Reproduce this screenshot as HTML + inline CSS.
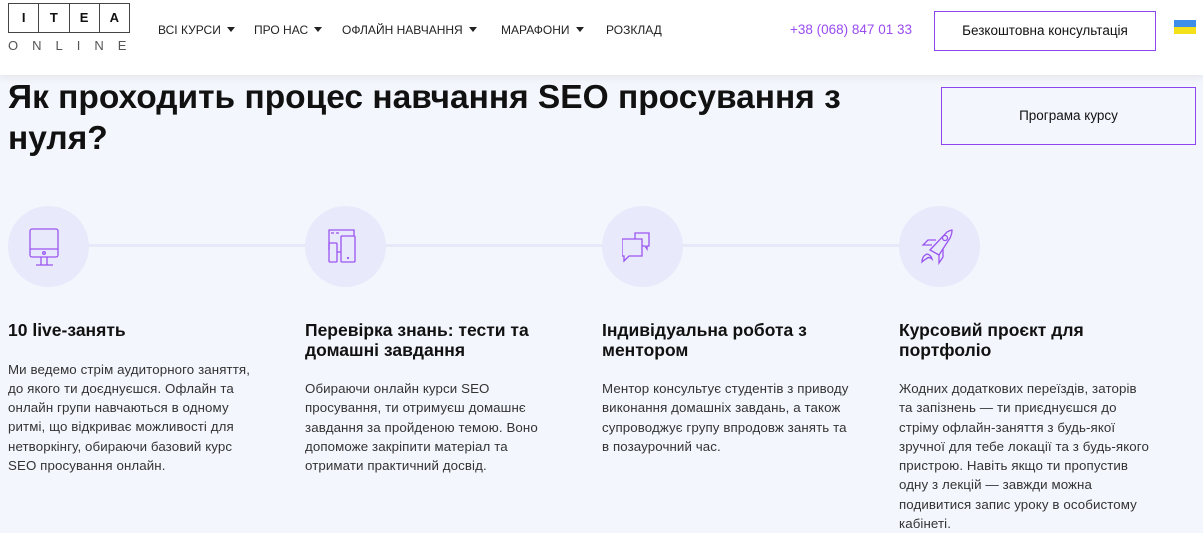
<!DOCTYPE html>
<html><head><meta charset="utf-8"><style>
*{margin:0;padding:0;box-sizing:border-box}
body{width:1203px;height:533px;overflow:hidden;background:#f4f6fd;font-family:"Liberation Sans","DejaVu Sans",sans-serif;color:#111;position:relative}
.hdr{position:absolute;left:0;top:0;width:1203px;height:75px;background:#fff;box-shadow:0 2px 8px rgba(0,0,0,.08)}
.logo{position:absolute;left:8px;top:3px}
.logo .box{display:flex;border:1px solid #444;width:122px;height:30px}
.logo .box span{flex:1;border-right:1px solid #444;text-align:center;font-weight:bold;font-size:13px;line-height:28px}
.logo .box span:last-child{border-right:none}
.logo .on{font-size:13px;letter-spacing:14px;color:#555;margin-top:5px}
.nav{position:absolute;top:23px;font-size:12px;color:#222}
.nav i{display:inline-block;width:0;height:0;border-left:4px solid transparent;border-right:4px solid transparent;border-top:5px solid #222;margin-left:6px;vertical-align:2px}
.phone{position:absolute;left:790px;top:22px;font-size:13.5px;color:#9a4cf0}
.btn{position:absolute;border:1.5px solid #8d45ee;background:#fff;text-align:center;font-size:13.5px;color:#111}
h1{position:absolute;left:8px;top:77px;font-size:33.5px;line-height:41px;font-weight:bold;width:880px}
.line{position:absolute;left:48px;width:891px;top:244px;height:3px;background:#e8e9f8}
.c{position:absolute;top:206px;width:81px;height:81px;border-radius:50%;background:#e8e9fb}
.c svg{position:absolute;left:20px;top:20px}
.col{position:absolute;top:321px;width:252px}
.col h3{font-size:17.5px;line-height:19.5px;font-weight:bold;margin-bottom:19px}
.col p{font-size:13.3px;line-height:19.3px;color:#333;letter-spacing:.1px}
</style></head><body>
<div class="hdr">
 <div class="logo"><div class="box"><span>I</span><span>T</span><span>E</span><span>A</span></div><div class="on">ONLINE</div></div>
 <div class="nav" style="left:158px">ВСІ КУРСИ<i></i></div>
 <div class="nav" style="left:254px">ПРО НАС<i></i></div>
 <div class="nav" style="left:342px">ОФЛАЙН НАВЧАННЯ<i></i></div>
 <div class="nav" style="left:501px">МАРАФОНИ<i></i></div>
 <div class="nav" style="left:606px">РОЗКЛАД</div>
 <div class="phone">+38 (068) 847 01 33</div>
 <div class="btn" style="left:934px;top:11px;width:222px;height:40px;line-height:37px">Безкоштовна консультація</div>
 <div style="position:absolute;left:1174px;top:20px;width:22px;height:14px"><div style="height:7px;background:#3d8ee8"></div><div style="height:7px;background:#f5e11a"></div></div>
</div>
<h1>Як проходить процес навчання SEO просування з нуля?</h1>
<div class="btn" style="left:941px;top:87px;width:255px;height:58px;line-height:55px;background:#f4f6fd">Програма курсу</div>
<div class="line"></div>
<div class="c" style="left:8px"><svg width="40" height="40" viewBox="0 0 40 40" fill="none" stroke="#9a55f0" stroke-width="1.3"><rect x="2" y="3" width="28" height="28" rx="2"/><line x1="2" y1="23" x2="30" y2="23"/><circle cx="16" cy="27" r="1.3"/><line x1="13" y1="31" x2="13" y2="39"/><line x1="19" y1="31" x2="19" y2="39"/><line x1="8" y1="39" x2="25" y2="39"/></svg></div>
<div class="c" style="left:305px"><svg width="40" height="40" viewBox="0 0 40 40" fill="none" stroke="#9a55f0" stroke-width="1.3"><path d="M4 24V4h25v6"/><line x1="6" y1="7" x2="9" y2="7"/><line x1="11" y1="7" x2="14" y2="7"/><rect x="4" y="17" width="8" height="19" rx="1"/><rect x="16" y="10" width="14" height="26" rx="1"/><path d="M12 26h4"/><circle cx="23" cy="32" r=".5"/></svg></div>
<div class="c" style="left:602px"><svg width="44" height="40" viewBox="0 0 44 40" fill="none" stroke="#9a55f0" stroke-width="1.3"><path d="M0 13h20v17H7l-5 5v-5H0z"/><path d="M20 20h3l2 3v-3h2V7H13v6"/></svg></div>
<div class="c" style="left:899px"><svg width="40" height="40" viewBox="0 0 40 40" fill="none" stroke="#9a55f0" stroke-width="1.3"><path d="M11 24L28 6q4-2 5-2q0 4-2 8L20 29z"/><circle cx="26" cy="12" r="2.5"/><path d="M17 14L9 14L4 19h9"/><path d="M24 23v8l-4 6v-8"/><path d="M3 36q0-6 5-8q4 1 5 5q-3-3-6 0q-2 1-4 3z"/></svg></div>
<div class="col" style="left:8px"><h3>10 live-занять</h3><p>Ми ведемо стрім аудиторного заняття, до якого ти доєднуєшся. Офлайн та онлайн групи навчаються в одному ритмі, що відкриває можливості для нетворкінгу, обираючи базовий курс SEO просування онлайн.</p></div>
<div class="col" style="left:305px"><h3>Перевірка знань: тести та домашні завдання</h3><p>Обираючи онлайн курси SEO просування, ти отримуєш домашнє завдання за пройденою темою. Воно допоможе закріпити матеріал та отримати практичний досвід.</p></div>
<div class="col" style="left:602px"><h3>Індивідуальна робота з ментором</h3><p>Ментор консультує студентів з приводу виконання домашніх завдань, а також супроводжує групу впродовж занять та в позаурочний час.</p></div>
<div class="col" style="left:899px"><h3>Курсовий проєкт для портфоліо</h3><p>Жодних додаткових переїздів, заторів та запізнень — ти приєднуєшся до стріму офлайн-заняття з будь-якої зручної для тебе локації та з будь-якого пристрою. Навіть якщо ти пропустив одну з лекцій — завжди можна подивитися запис уроку в особистому кабінеті.</p></div>
</body></html>
